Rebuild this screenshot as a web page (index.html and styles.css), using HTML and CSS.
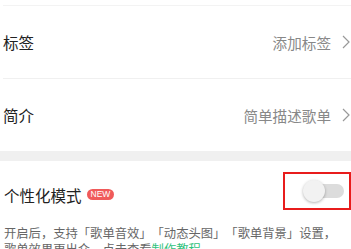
FILE: index.html
```html
<!DOCTYPE html>
<html lang="zh-CN">
<head>
<meta charset="utf-8">
<link rel="stylesheet" href="styles.css">
</head>
<body>
<div class="top-line"></div>
<div class="row sep">
  <span class="label">标签</span>
  <span class="value">添加标签<svg class="chev" viewBox="0 0 8 14" width="8" height="14"><path d="M1 1 L7 7 L1 13" fill="none" stroke="#999" stroke-width="1.2"/></svg></span>
</div>
<div class="row">
  <span class="label">简介</span>
  <span class="value">简单描述歌单<svg class="chev" viewBox="0 0 8 14" width="8" height="14"><path d="M1 1 L7 7 L1 13" fill="none" stroke="#999" stroke-width="1.2"/></svg></span>
</div>
<div class="band"></div>
<div class="mode-row">
  <div class="mode-title"><span class="label">个性化模式</span><span class="badge">NEW</span></div>
  <div class="highlight">
    <div class="toggle"><div class="thumb"></div></div>
  </div>
</div>
<p class="desc">开启后，支持「歌单音效」「动态头图」「歌单背景」设置，歌单效果更出众，点击查看<span class="link">制作教程</span></p>
</body>
</html>
```
FILE: styles.css
```css
html, body {
  margin: 0;
  padding: 0;
  background: #fff;
  font-family: "Noto Sans CJK SC", "Noto Sans", sans-serif;
  width: 351px;
  overflow: hidden;
}
.top-line {
  margin: 5px 0 0 3px;
  height: 1px;
  background: #f3f3f3;
}
.row {
  height: 72px;
  margin-left: 3px;
  display: flex;
  align-items: center;
  justify-content: space-between;
}
.row.sep {
  border-bottom: 1px solid #f0f0f0;
}
.label {
  font-size: 15.5px;
  color: #222;
  line-height: 20px;
}
.value {
  display: flex;
  align-items: center;
  font-size: 14.6px;
  color: #888;
}
.chev {
  margin-left: 11px;
  margin-right: 1px;
}
.band {
  height: 10px;
  background: #f0f0f0;
}
.mode-row {
  display: flex;
  justify-content: space-between;
  align-items: center;
  padding-top: 11px;
  margin-left: 4px;
}
.mode-title {
  display: flex;
  align-items: center;
  margin-top: 7px;
}
.badge {
  margin-left: 5px;
  background: #f05a5a;
  color: #fff;
  font-family: "Liberation Sans", sans-serif;
  font-size: 8.5px;
  line-height: 11px;
  height: 11px;
  padding: 0 4px;
  border-radius: 6px;
}
.highlight {
  width: 64px;
  height: 34px;
  border: 2px solid #e81c1c;
  display: flex;
  align-items: center;
  justify-content: flex-end;
  padding-right: 0;
  box-sizing: content-box;
}
.toggle {
  position: relative;
  width: 40px;
  height: 14px;
  border-radius: 7px;
  background: #dcdcdc;
  margin-right: 5px;
}
.thumb {
  position: absolute;
  left: -1px;
  top: -4px;
  width: 22px;
  height: 22px;
  border-radius: 50%;
  background: #f2f2f2;
  box-shadow: 0 1px 3px rgba(0,0,0,0.3);
}
.desc {
  margin: 15px 0 0 4px;
  width: 340px;
  font-size: 12.3px;
  line-height: 16px;
  color: #666;
  text-spacing-trim: space-all;
  font-feature-settings: "halt" 0, "chws" 0;
}
.link {
  color: #31c27c;
}
```
